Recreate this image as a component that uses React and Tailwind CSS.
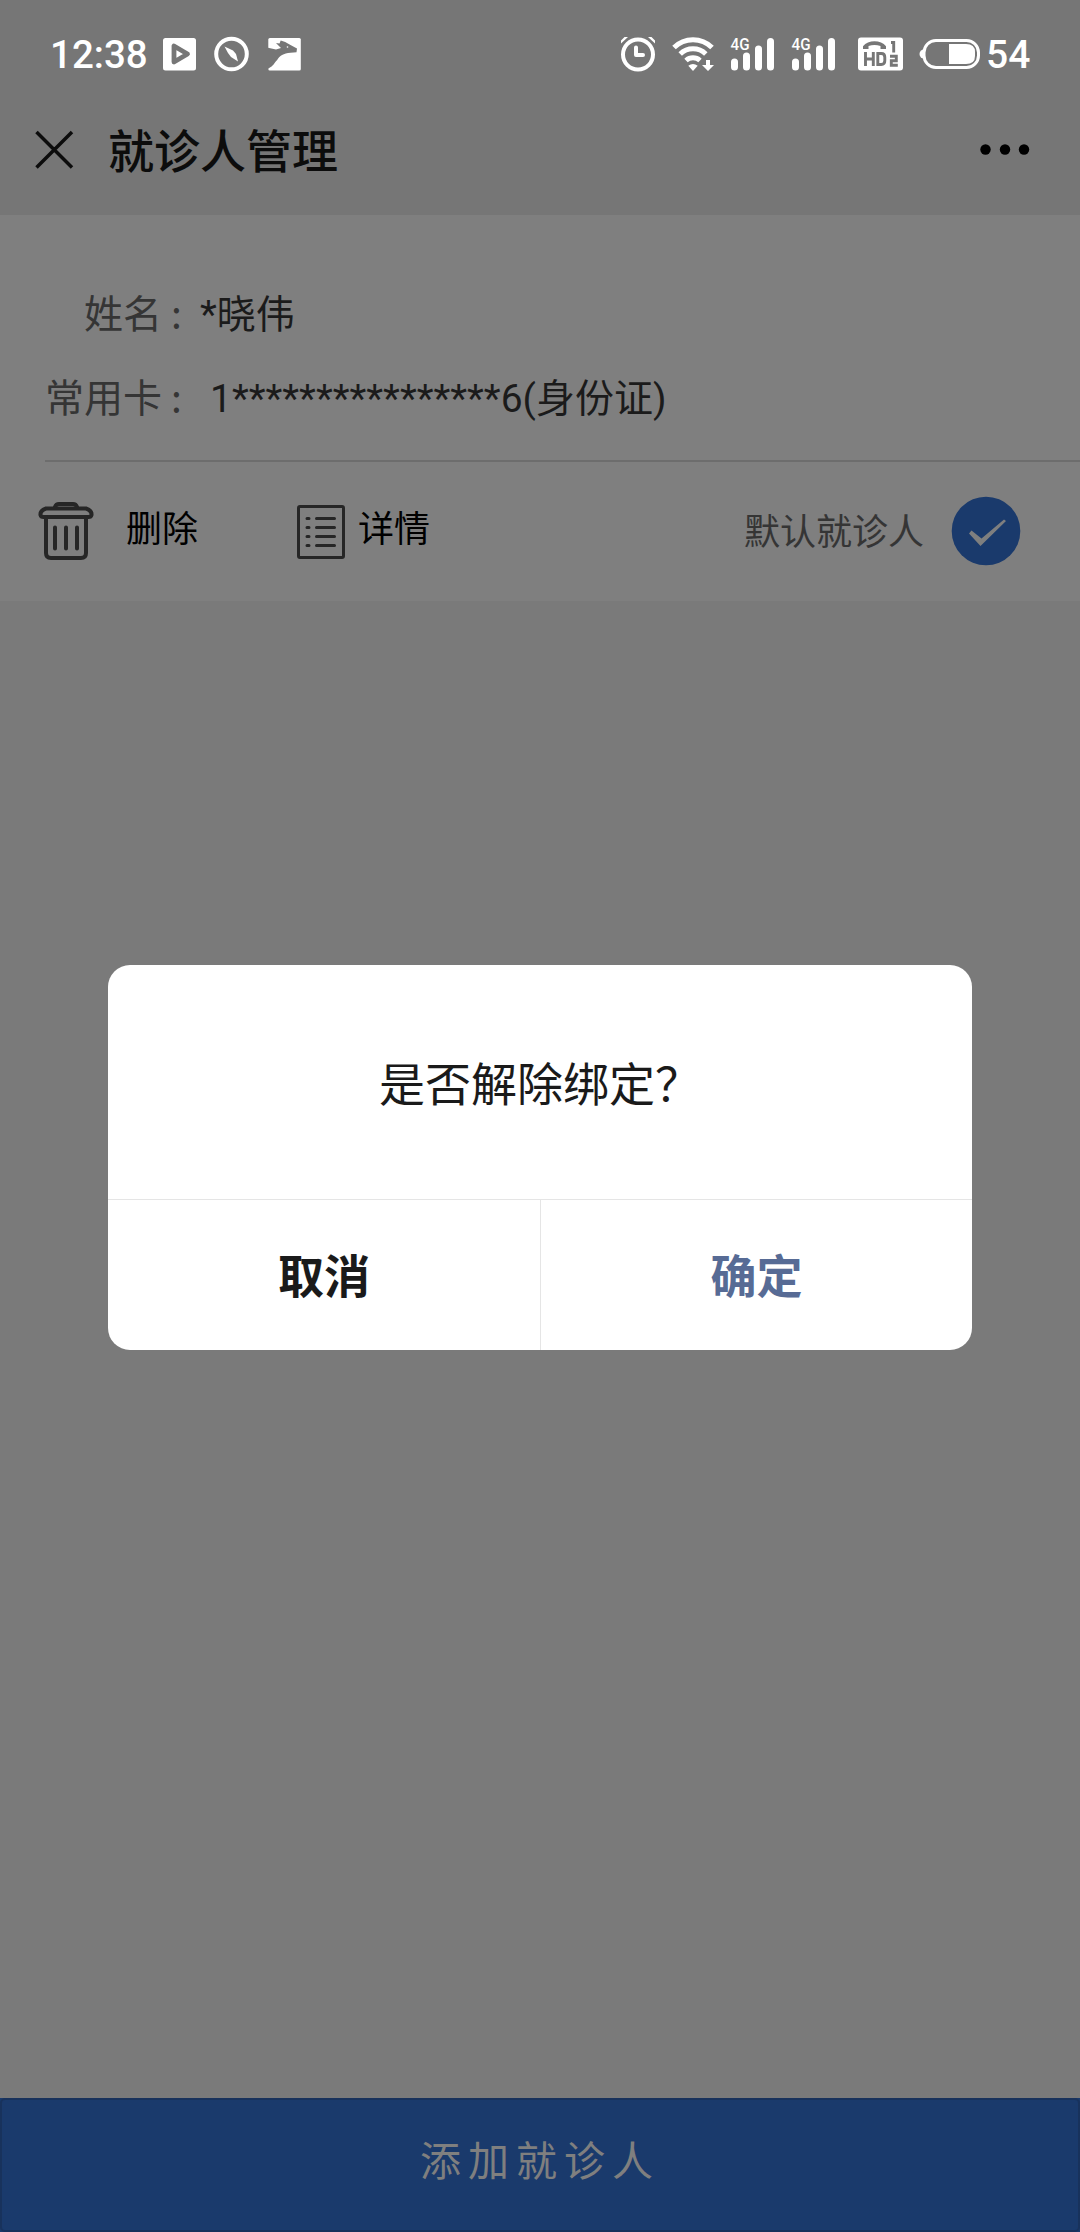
/**
 * Patient Management Page
 *
 * - Phone status bar and title bar
 * - Patient card with delete / detail / default actions
 * - Unbind confirmation dialog over the dimmed page
 */

function StatusBar() {
  return (
    <div className="flex h-[88px] items-center pt-[20px] pl-[50px] text-white">
      <span className="w-[110px] pt-[2px] text-[38.5px] leading-[68px] font-medium whitespace-nowrap">12:38</span>

      {/* Notification icons */}
      <svg className="h-[70px] w-[140px]" viewBox="160 19 140 70" fill="none" overflow="visible">
        <rect x="163" y="38" width="33" height="32.500" rx="2.500" fill="#fff" />
        <path d="M174 46v16l13.500-8z" stroke="#767676" strokeWidth="4.800" strokeLinejoin="round" />
        <circle cx="231.500" cy="54" r="15.300" stroke="#fff" strokeWidth="4" />
        <path d="M224.500 46.500l8.500 4 3 3.500 2 7.500-7-4.500-3-4z" fill="#fff" />
        <rect x="268.300" y="38" width="32.500" height="32.500" rx="1.500" fill="#fff" />
        <path
          d="M276 43l3.500.5 1.200-3 4.500 1.500 5.300 3 6.500 3.500-.5 3.700-6 .5c-7 .5-11 3-13.500 7.500-2.500 2-3 5.500-9 8.500V47.800l8 1.700 5-1.500z"
          fill="#767676"
        />
        <circle cx="287.500" cy="47" r="0.800" fill="#fff" />
      </svg>

      {/* System icons */}
      <svg className="ml-auto h-[70px] w-[373px]" viewBox="612 19 373 70" fill="none">
        <circle cx="638" cy="54.500" r="15" stroke="#fff" strokeWidth="4" />
        <path d="M621 43.500v-3l3.500-3.500h3.500zM655 43.500v-3l-3.500-3.500h-3.500z" fill="#fff" />
        <path d="M636 47.500v7.500h7" stroke="#fff" strokeWidth="4" strokeLinecap="round" strokeLinejoin="round" />
        <g stroke="#fff" strokeWidth="5">
          <path d="M674 47.500a27 27 0 0 1 38 0" />
          <path d="M680.200 54a18.500 18.500 0 0 1 25.600 0" />
          <path d="M686 60.500a10.500 10.500 0 0 1 14 0" />
        </g>
        <path d="M693 71l-4.700-5.200q4.700-3.600 9.400 0z" fill="#fff" />
        <path d="M706 60h4v5h4l-6 6-6-6h4z" fill="#fff" />
        <SignalBars x={731} />
        <SignalBars x={792} />
        <rect x="858" y="37.500" width="45" height="33" rx="3" fill="#fff" />
        <path d="M863 49v-2.800c5-6.500 18-6.500 23 0V49h-5.500v-3q-6-2-12 0v3z" fill="#767676" />
        <g stroke="#767676" strokeWidth="2.900">
          <path d="M865.500 52v14M873.300 52v14M865.500 59h8M877.800 53.500v11h3.500q3.500 0 3.500-3.700v-3.600q0-3.700-3.500-3.700z" />
          <path d="M891 42.500h2.700v10M890 56.300h6.300v4.500h-5v4.500h6.500" />
        </g>
        <rect x="924" y="40.500" width="54.500" height="27" rx="12" stroke="#fff" strokeWidth="3" />
        <path d="M924 49.500a4.500 4.500 0 0 0 0 9z" fill="#fff" />
        <path d="M949 44h17q9 0 9 8v4q0 8-9 8h-17z" fill="#fff" />
      </svg>
      <span className="ml-[1px] w-[94px] pt-[2px] text-[39px] leading-[68px] font-medium">54</span>
    </div>
  );
}

function SignalBars({ x }) {
  return (
    <g>
      <text x={x - 0.5} y="50" fill="#fff" fontSize="16.5" fontWeight="500" textLength="19" lengthAdjust="spacingAndGlyphs">
        4G
      </text>
      <g fill="#fff">
        <rect x={x} y="58.500" width="7" height="12" rx="3.500" />
        <rect x={x + 12} y="52.500" width="7" height="18" rx="3.500" />
        <rect x={x + 24} y="45.500" width="7" height="25" rx="3.500" />
        <rect x={x + 36} y="38" width="7" height="32.500" rx="3.500" />
      </g>
    </g>
  );
}

function TitleBar() {
  return (
    <header className="flex h-[127px] items-center pr-[50px] pb-[4px] pl-[34px] text-[#0c0c0c]">
      <svg className="h-[40px] w-[40px]" viewBox="0 0 40 40" fill="none" stroke="currentColor" strokeWidth="3.500">
        <path d="M2.500 2l35.500 35.500M38 2L2.500 37.500" />
      </svg>
      <h1 className="ml-[34px] pt-[4px] text-[46px] leading-[60px] font-medium">就诊人管理</h1>
      <svg className="ml-auto h-[12px] w-[50px] text-black" viewBox="0 0.500 50 12" fill="currentColor">
        <circle cx="5.500" cy="6" r="5.200" />
        <circle cx="25" cy="6" r="5.200" />
        <circle cx="44" cy="6" r="5.200" />
      </svg>
    </header>
  );
}

function TrashIcon() {
  return (
    <svg className="h-[58px] w-[56px]" viewBox="38 501 56 58" fill="none" stroke="#262626" strokeWidth="4" strokeLinecap="round">
      <path d="M55 507v-1q1-3 4-3h14q3 0 4 3v1" />
      <path d="M46 507.500h40q6 2 5.500 6.500-.5 2-3 2h-45q-2.500 0-3-2-.5-4.500 5.500-6.500z" />
      <path d="M46 516v36q0 5 5 5h30q5 0 5-5v-36M55 526.500v21M66 526.500v21M77 526.500v21" />
    </svg>
  );
}

function DetailIcon() {
  return (
    <svg className="h-[54px] w-[48px]" viewBox="0 0 48 54" fill="none" stroke="#262626" strokeWidth="3">
      <rect x="1.500" y="1.500" width="45" height="51" rx="1.500" />
      <path d="M10 13.500h2M19.500 13.500h18M10 22.500h2M19.500 22.500h18M10 31.500h2M19.500 31.500h18M10 40.500h2M19.500 40.500h18" strokeLinecap="round" />
    </svg>
  );
}

function PatientCard() {
  return (
    <section className="h-[386px] bg-[#7f7f7f] text-[39px] text-[#1b1b1b]">
      <div className="ml-[45px] h-[247px] border-b-2 border-[#6d6d6d] pt-[70px]">
        <div className="flex h-[60px] items-center">
          <span className="w-[126px] pl-[39px] leading-[60px] whitespace-nowrap text-[#353535]">姓名</span>
          <span className="w-[29px] pb-[6px] font-['Noto_Sans_CJK_SC',sans-serif] leading-[60px] text-[#353535]">:</span>
          <span>*晓伟</span>
        </div>
        <div className="mt-[24px] flex h-[60px] items-center">
          <span className="w-[126px] leading-[60px] whitespace-nowrap text-[#353535]">常用卡</span>
          <span className="w-[39px] pb-[6px] font-['Noto_Sans_CJK_SC',sans-serif] leading-[60px] text-[#353535]">:</span>
          <span>1****************6(身份证)</span>
        </div>
      </div>

      {/* Actions */}
      <div className="flex h-[139px] items-center pr-[59px] pl-[38px] text-[36px] text-black">
        <span className="pb-[2px]">
          <TrashIcon />
        </span>
        <span className="ml-[32px] pb-[3px]">删除</span>
        <span className="ml-[99px] pt-[1px]">
          <DetailIcon />
        </span>
        <span className="ml-[13px] pb-[3px]">详情</span>
        <span className="ml-auto pt-[2px] text-[#353535]">默认就诊人</span>
        <svg className="mb-[2px] ml-[27px] h-[70px] w-[70px]" viewBox="0 0 70 70">
          <circle cx="35" cy="35" r="34.300" fill="#1a3a6c" />
          <path d="M18 37.500l2.500-3 10 8L53 23.500l2 1.500-25.500 25z" fill="#7f7f7f" />
        </svg>
      </div>
    </section>
  );
}

function ConfirmDialog() {
  return (
    <div className="absolute top-[965px] left-[108px] h-[385px] w-[864px] overflow-hidden rounded-[22px] bg-white text-[46px] text-[#1a1a1a]">
      <p className="flex h-[234px] items-center justify-center pt-[7px]">是否解除绑定？</p>
      <div className="grid h-[151px] grid-cols-2 border-t border-[#e5e5e5] font-bold">
        <button className="pt-[5px]">取消</button>
        <button className="border-l border-[#e5e5e5] pt-[5px] text-[#576b95]">确定</button>
      </div>
    </div>
  );
}

function App() {
  return (
    <div className="relative flex h-[2232px] w-[1080px] flex-col overflow-hidden bg-[#7a7a7a] font-[Roboto,'Noto_Sans_CJK_SC',sans-serif]">
      <div className="bg-[#767676]">
        <StatusBar />
        <TitleBar />
      </div>
      <PatientCard />
      <div className="mt-auto flex h-[134px] bg-[#1a3a6c]">
        <button className="grow rounded-[5px] border-2 border-[#18325c] pb-[4px] text-[41px] tracking-[7px] text-[#7f7f7f]">
          添加就诊人
        </button>
      </div>
      <ConfirmDialog />
    </div>
  );
}

export default App;
